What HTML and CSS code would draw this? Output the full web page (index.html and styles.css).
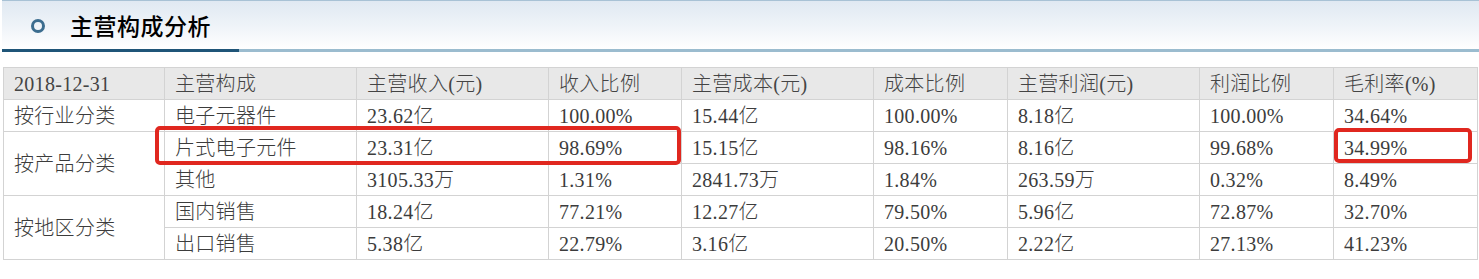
FILE: index.html
```html
<!DOCTYPE html>
<html lang="zh-CN">
<head>
<meta charset="utf-8">
<title>主营构成分析</title>
<link rel="stylesheet" href="styles.css">
</head>
<body>
<section class="panel">
  <header class="panel-head">
    <div class="head-band">
      <span class="ring"></span>
      <h2 class="title">主营构成分析</h2>
    </div>
    <div class="head-bar"><span class="bar-dark"></span><span class="bar-light"></span></div>
  </header>

  <div class="table-wrap">
    <table class="biz">
      <colgroup>
        <col class="c1"><col class="c2"><col class="c3"><col class="c4"><col class="c5">
        <col class="c6"><col class="c7"><col class="c8"><col class="c9">
      </colgroup>
      <thead>
        <tr>
          <th>2018-12-31</th><th>主营构成</th><th>主营收入(元)</th><th>收入比例</th><th>主营成本(元)</th><th>成本比例</th><th>主营利润(元)</th><th>利润比例</th><th>毛利率(%)</th>
        </tr>
      </thead>
      <tbody>
        <tr>
          <td>按行业分类</td><td>电子元器件</td><td>23.62亿</td><td>100.00%</td><td>15.44亿</td><td>100.00%</td><td>8.18亿</td><td>100.00%</td><td>34.64%</td>
        </tr>
        <tr>
          <td rowspan="2">按产品分类</td><td>片式电子元件</td><td>23.31亿</td><td>98.69%</td><td>15.15亿</td><td>98.16%</td><td>8.16亿</td><td>99.68%</td><td>34.99%</td>
        </tr>
        <tr>
          <td>其他</td><td>3105.33万</td><td>1.31%</td><td>2841.73万</td><td>1.84%</td><td>263.59万</td><td>0.32%</td><td>8.49%</td>
        </tr>
        <tr>
          <td rowspan="2">按地区分类</td><td>国内销售</td><td>18.24亿</td><td>77.21%</td><td>12.27亿</td><td>79.50%</td><td>5.96亿</td><td>72.87%</td><td>32.70%</td>
        </tr>
        <tr>
          <td>出口销售</td><td>5.38亿</td><td>22.79%</td><td>3.16亿</td><td>20.50%</td><td>2.22亿</td><td>27.13%</td><td>41.23%</td>
        </tr>
      </tbody>
    </table>
    <span class="mark mark-row"></span>
    <span class="mark mark-cell"></span>
  </div>
</section>
</body>
</html>
```

FILE: styles.css
```css
html, body {
  margin: 0;
  padding: 0;
  background: #ffffff;
}

body {
  width: 1479px;
  font-family: "Liberation Serif", "Noto Sans CJK SC", serif;
  color: #333;
}

.panel {
  display: flex;
  flex-direction: column;
}

.panel-head {
  display: flex;
  flex-direction: column;
  padding-left: 2px;
}

.head-band {
  height: 49px;
  box-sizing: border-box;
  border-top: 1px solid #a8c2d5;
  background: linear-gradient(to bottom, #e0e9f2 0%, #eef3f8 50%, #ffffff 100%);
  display: flex;
  align-items: center;
  padding-left: 29px;
}

.ring {
  width: 14px;
  height: 14px;
  box-sizing: border-box;
  border-radius: 50%;
  border: 3px solid #3c6d8f;
  margin-top: 1px;
}

.title {
  margin: 0 0 0 25px;
  font-family: "Noto Sans CJK SC", sans-serif;
  font-size: 23px;
  font-weight: 500;
  line-height: 1;
  color: #000;
  letter-spacing: 0.5px;
}

.head-bar {
  display: flex;
  height: 3px;
}

.bar-dark {
  width: 237px;
  background: #1f5578;
}

.bar-light {
  flex: 1;
  background: #9bbccf;
}

.table-wrap {
  position: relative;
  margin: 15px 0 0 3px;
  width: 1474px;
}

.biz {
  width: 1474px;
  table-layout: fixed;
  border-collapse: collapse;
  border: 1px solid #cfcfcf;
  font-size: 20px;
  font-weight: 300;
  color: #3c3c3c;
}

.c1 { width: 161px; }
.c2 { width: 192px; }
.c3 { width: 192px; }
.c4 { width: 133px; }
.c5 { width: 192px; }
.c6 { width: 134px; }
.c7 { width: 192px; }
.c8 { width: 134px; }
.c9 { width: 144px; }

.biz th,
.biz td {
  height: 31px;
  padding: 0 10px;
  border: 1px solid #d3d3d3;
  text-align: left;
  vertical-align: middle;
  font-weight: 300;
  white-space: nowrap;
  line-height: 20px;
  letter-spacing: 0.3px;
}

.biz thead th {
  background: #e8e8e8;
  color: #444;
}

.mark {
  position: absolute;
  box-sizing: border-box;
  border: 4px solid #e0271f;
  border-radius: 5px;
}

.mark-row {
  left: 152px;
  top: 59px;
  width: 526px;
  height: 39px;
}

.mark-cell {
  left: 1331px;
  top: 61px;
  width: 138px;
  height: 35px;
}
```
